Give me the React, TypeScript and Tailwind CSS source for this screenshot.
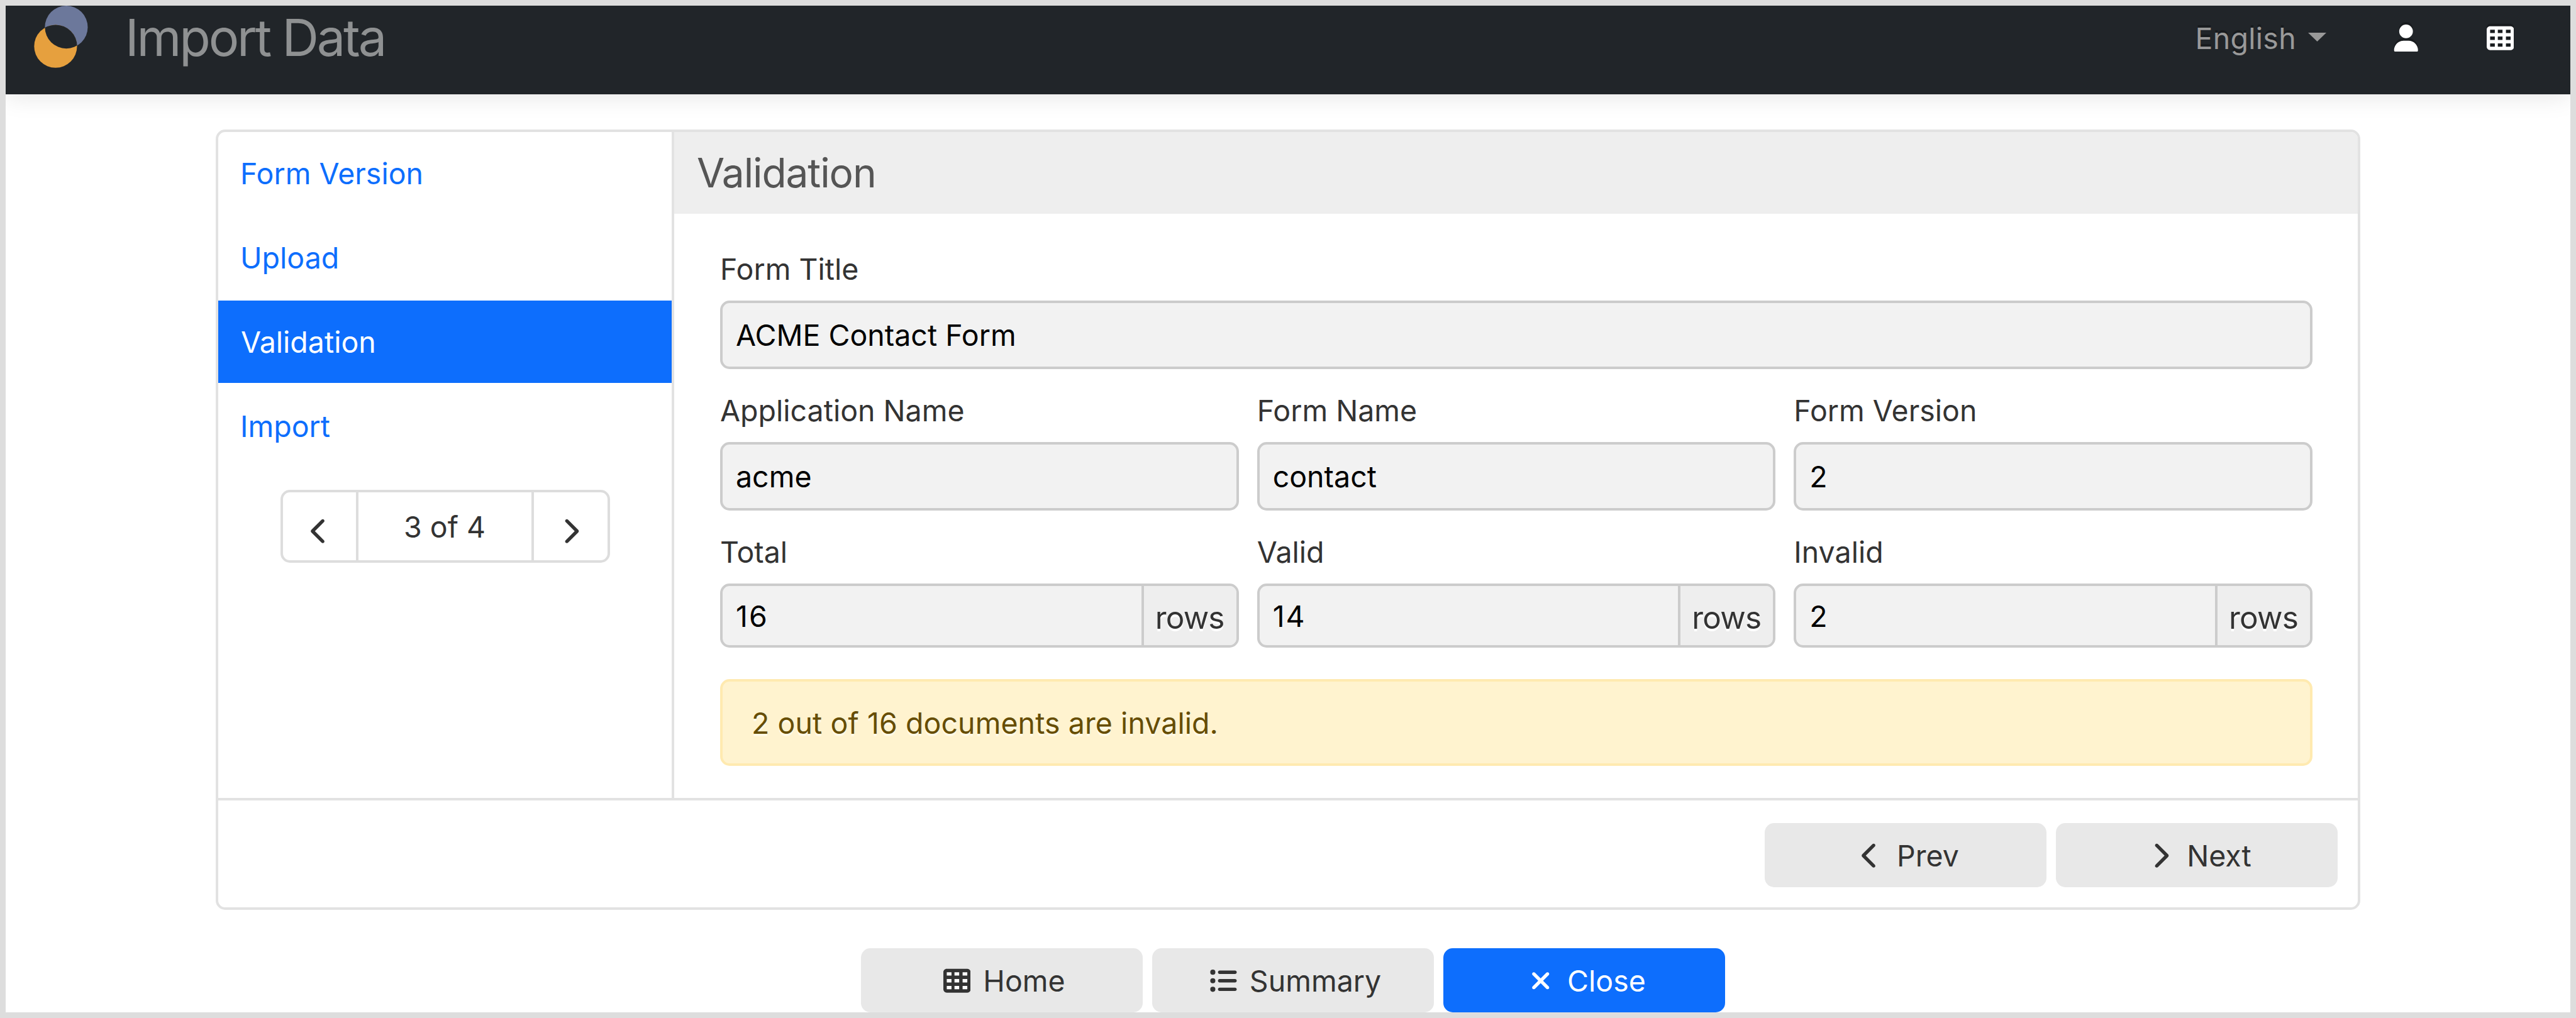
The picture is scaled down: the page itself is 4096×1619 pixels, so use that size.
import React from "react";
import {
  FaChevronLeft,
  FaChevronRight,
  FaListUl,
  FaTableCells,
  FaUser,
  FaXmark,
} from "react-icons/fa6";

const steps = ["Form Version", "Upload", "Validation", "Import"];
const activeStep = "Validation";

function Logo() {
  return (
    <svg className="h-[99px] w-[86px]" viewBox="60 10.5 95 109.5" aria-hidden="true">
      <defs>
        <clipPath id="logo-lens">
          <circle cx="116.8" cy="48.3" r="37.6" />
        </clipPath>
      </defs>
      <circle cx="116.8" cy="48.3" r="37.7" fill="#6c789b" />
      <circle cx="98" cy="82" r="37.7" fill="#e6a03e" />
      <circle cx="98" cy="82" r="37.9" fill="#212529" clipPath="url(#logo-lens)" />
    </svg>
  );
}

// Table grid whose cells are filled white.
function FilledTableIcon({ className }: { className?: string }) {
  return (
    <svg className={className} viewBox="0 0 512 512" aria-hidden="true">
      <rect x="40" y="70" width="432" height="372" fill="#fff" />
      <FaTableCells size={512} />
    </svg>
  );
}

function Navbar() {
  return (
    <header className="h-[141px] shrink-0 bg-[#212529] shadow-[0_4px_36px_rgba(0,0,0,0.1)]">
      <div className="flex h-[103px] items-center pl-[45px] pr-[90px]">
        <div className="self-start">
          <Logo />
        </div>
        <h1 className="ml-[59px] text-[81px] leading-[103px] tracking-[-3.2px] text-[#8f9192]">
          Import Data
        </h1>
        <div className="ml-auto flex items-center">
          <span className="text-[46.5px] leading-[102px] tracking-[0.3px] text-[#999] [text-shadow:0_-4px_0_rgba(0,0,0,0.25)]">
            English
          </span>
          <svg className="mb-[3px] ml-[19px] h-[14px] w-[29px]" viewBox="0 0 29 14" aria-hidden="true">
            <path d="M0 0h29L14.5 14z" fill="#999" />
          </svg>
          <FaUser className="ml-[105px] size-[43.5px] text-white [filter:drop-shadow(0_-4px_0_rgba(0,0,0,0.25))]" />
          <FaTableCells className="ml-[106px] size-[43.5px] text-white [filter:drop-shadow(0_-4px_0_rgba(0,0,0,0.25))]" />
        </div>
      </div>
    </header>
  );
}

function Pager() {
  return (
    <div className="mx-auto mt-[36px] flex h-[116px] w-[524px] rounded-[15px] border-4 border-[#ddd] text-[#333]">
      <button className="flex w-[116px] items-center justify-center pt-[15px]">
        <FaChevronLeft className="size-[43.5px]" />
      </button>
      <div className="flex flex-1 items-center justify-center border-x-4 border-[#ddd] pt-[2px] text-[46.5px]">
        3 of 4
      </div>
      <button className="flex w-[117px] items-center justify-center pt-[15px]">
        <FaChevronRight className="size-[43.5px]" />
      </button>
    </div>
  );
}

function Sidebar() {
  return (
    <nav className="w-[725px] shrink-0 border-r-4 border-[#e2e2e2]">
      <ul className="flex flex-col gap-[3.6px]">
        {steps.map((step) => (
          <li
            key={step}
            className={
              step === activeStep
                ? "flex h-[130.6px] items-center bg-[#0d6efd] pl-[36px] pt-[1px] text-white"
                : "flex h-[130.6px] items-center pl-[35px] pt-[1px] text-[#0d6efd]"
            }
          >
            {step}
          </li>
        ))}
      </ul>
      <Pager />
    </nav>
  );
}

function Field({ label, value }: { label: string; value: string }) {
  return (
    <div>
      <div className="mb-[15px] leading-[70px] text-[#333]">{label}</div>
      <div className="flex h-[109px] items-center rounded-[15px] border-4 border-[#ccc] bg-[#f2f2f2] pl-[21px] pt-[1px] text-black">
        {value}
      </div>
    </div>
  );
}

function CountField({ label, value }: { label: string; value: string }) {
  return (
    <div>
      <div className="mb-[15px] leading-[70px] text-[#333]">{label}</div>
      <div className="flex h-[102px] overflow-hidden rounded-[15px] border-4 border-[#ccc] bg-[#f2f2f2]">
        <div className="flex flex-1 items-center pl-[21px] pt-[1px] tracking-[2px] text-black">{value}</div>
        <div className="flex w-[151px] items-center border-l-4 border-[#ccc] bg-[#eee] pl-[18px] pt-[6px] text-[49.5px] tracking-[-0.8px] text-[#333] [text-shadow:0_4px_0_#fff]">
          rows
        </div>
      </div>
    </div>
  );
}

function ValidationPanel() {
  return (
    <section className="flex-1">
      <h2 className="flex h-[130px] items-center rounded-tr-[11px] bg-[#eee] pl-[36px] text-[64px] tracking-[-1.1px] text-[#555]">
        Validation
      </h2>
      <div className="pl-[73px] pr-[72px] pt-[53px]">
        <Field label="Form Title" value="ACME Contact Form" />
        <div className="mt-[31px] grid grid-cols-3 gap-x-[29px] gap-y-[31px]">
          <Field label="Application Name" value="acme" />
          <Field label="Form Name" value="contact" />
          <Field label="Form Version" value="2" />
          <CountField label="Total" value="16" />
          <CountField label="Valid" value="14" />
          <CountField label="Invalid" value="2" />
        </div>
        <div className="mt-[50px] flex h-[138px] items-center rounded-[15px] border-4 border-[#ffeab0] bg-[#fff3cf] pl-[46px] pt-[2px] tracking-[0.07px] text-[#664d03] [text-shadow:0_4px_0_rgba(255,255,255,0.5)]">
          2 out of 16 documents are invalid.
        </div>
      </div>
    </section>
  );
}

function Button({
  icon: Icon,
  label,
  primary = false,
}: {
  icon: React.ComponentType<{ className?: string }>;
  label: string;
  primary?: boolean;
}) {
  return (
    <button
      className={
        primary
          ? "flex h-[102px] w-[448px] items-center justify-center gap-[15px] rounded-[15px] bg-[#0d6efd] pl-[2px] pt-[2px] text-white"
          : "flex h-[102px] w-[448px] items-center justify-center gap-[15px] rounded-[15px] bg-[#e8e8e8] pl-[2px] pt-[2px] text-[#333]"
      }
    >
      <span className="flex w-[54px] justify-center">
        <Icon className="size-[43.5px]" />
      </span>
      {label}
    </button>
  );
}

export default function App() {
  return (
    <div className="h-[1619px] w-[4096px] bg-[#ddd] p-[9px] font-['Inter',sans-serif] text-[46.5px] leading-[70px]">
      <div className="flex h-full flex-col overflow-hidden bg-white">
        <Navbar />
        <main className="ml-[334px] mt-[56px] flex h-[1241px] w-[3410px] shrink-0 flex-col rounded-[15px] border-4 border-[#e2e2e2]">
          <div className="flex h-[1059px]">
            <Sidebar />
            <ValidationPanel />
          </div>
          <footer className="flex justify-end gap-[15px] border-t-4 border-[#e2e2e2] pr-[32px] pt-[36px]">
            <Button icon={FaChevronLeft} label="Prev" />
            <Button icon={FaChevronRight} label="Next" />
          </footer>
        </main>
        <div className="mt-[61px] flex justify-center gap-[15px] pl-[16px]">
          <Button icon={FilledTableIcon} label="Home" />
          <Button icon={FaListUl} label="Summary" />
          <Button icon={FaXmark} label="Close" primary />
        </div>
      </div>
    </div>
  );
}
